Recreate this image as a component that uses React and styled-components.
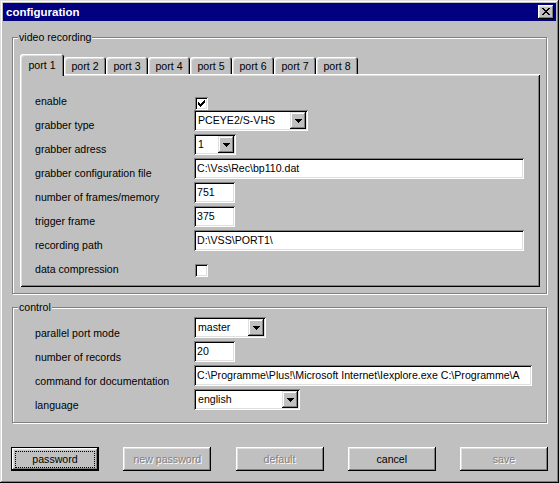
import React from "react";
import styled, { createGlobalStyle } from "styled-components";

const Global = createGlobalStyle`
  html, body { margin: 0; padding: 0; background: #c0c0c0; }
  * { box-sizing: border-box; }
`;

const FONT = `"Liberation Sans", Arial, sans-serif`;

const Window = styled.div`
  width: 559px;
  height: 483px;
  padding: 3px;
  background: #c0c0c0;
  font-family: ${FONT};
  font-size: 10.6px;
  color: #000;
  box-shadow: inset -1px -1px #000, inset 1px 1px #dfdfdf,
    inset -2px -2px #808080, inset 2px 2px #fff;
`;

const TitleBar = styled.div`
  height: 18px;
  background: #000080;
  display: flex;
  align-items: center;
  justify-content: space-between;
  padding: 0 2px 0 3px;
`;

const TitleText = styled.div`
  color: #fff;
  font-weight: bold;
  font-size: 11.5px;
  line-height: 14px;
`;

const CloseButton = styled.div`
  width: 16px;
  height: 14px;
  background: #c0c0c0;
  display: flex;
  align-items: center;
  justify-content: center;
  padding: 0 0 1px 0;
  box-shadow: inset -1px -1px #000, inset 1px 1px #fff,
    inset -2px -2px #808080, inset 2px 2px #dfdfdf;
`;

const Group = styled.div`
  position: relative;
  width: 535px;
  height: ${(p) => p.$h}px;
  margin: ${(p) => p.$mt}px 0 0 9px;
  padding: ${(p) => p.$pad};
  border: 1px solid #808080;
  box-shadow: inset 1px 1px #fff, 1px 1px #fff;
`;

const Legend = styled.div`
  position: absolute;
  left: 5px;
  top: -8px;
  line-height: 14px;
  padding: 0 1px;
  background: #c0c0c0;
`;

const TabStrip = styled.div`
  display: flex;
  align-items: flex-end;
  height: 20px;
`;

const Tab = styled.div`
  position: relative;
  z-index: ${(p) => (p.$active ? 2 : 0)};
  width: ${(p) => (p.$active ? 44 : 42)}px;
  height: ${(p) => (p.$active ? 22 : 17)}px;
  margin-bottom: ${(p) => (p.$active ? -2 : 0)}px;
  padding-top: ${(p) => (p.$active ? 5 : 3)}px;
  line-height: 13px;
  text-align: center;
  background: #c0c0c0;
  border-radius: 3px 3px 0 0;
  box-shadow: inset 1px 1px #fff, inset -1px 0 #000, inset -2px 0 #808080,
    inset 2px 2px #dfdfdf;
`;

const Panel = styled.div`
  width: 520px;
  height: 213px;
  padding: 12px 0 0 15px;
  box-shadow: inset 1px 1px #fff, inset -1px -1px #000,
    inset 2px 2px #dfdfdf, inset -2px -2px #808080;
`;

const Row = styled.div`
  display: flex;
  align-items: flex-start;
  height: 24px;
`;

const Label = styled.div`
  width: 159px;
  padding-top: ${(p) => p.$pt}px;
  line-height: 13px;
  white-space: nowrap;
`;

const sunken = `
  background: #fff;
  box-shadow: inset 1px 1px #808080, inset -1px -1px #fff,
    inset 2px 2px #000, inset -2px -2px #dfdfdf;
`;

const TextField = styled.div`
  ${sunken}
  width: ${(p) => p.$w}px;
  height: 21px;
  padding: 3px 3px 0 3px;
  line-height: 14px;
  white-space: nowrap;
  overflow: hidden;
`;

const Combo = styled.div`
  ${sunken}
  width: ${(p) => p.$w}px;
  height: 21px;
  padding: 2px;
  display: flex;
  align-items: stretch;
`;

const ComboText = styled.div`
  flex: 1;
  padding: 1px 0 0 2px;
  line-height: 14px;
  white-space: nowrap;
  overflow: hidden;
`;

const ComboButton = styled.div`
  width: 16px;
  height: 17px;
  background: #c0c0c0;
  display: flex;
  align-items: center;
  justify-content: center;
  box-shadow: inset -1px -1px #000, inset 1px 1px #dfdfdf,
    inset -2px -2px #808080, inset 2px 2px #fff;
`;

const CheckBox = styled.div`
  ${sunken}
  width: 13px;
  height: 13px;
  margin: ${(p) => p.$mt}px 0 0 1px;
  display: flex;
`;

const ButtonRow = styled.div`
  display: flex;
  justify-content: space-between;
  width: 537px;
  margin: 24px 0 0 8px;
`;

const Button = styled.div`
  width: 88px;
  height: 24px;
  display: flex;
  align-items: center;
  justify-content: center;
  background: #c0c0c0;
  line-height: 13px;
  color: ${(p) => (p.$disabled ? "#808080" : "#000")};
  text-shadow: ${(p) => (p.$disabled ? "1px 1px 0 #fff" : "none")};
  border: ${(p) => (p.$default ? "1px solid #000" : "none")};
  box-shadow: inset -1px -1px #000, inset 1px 1px #fff,
    inset -2px -2px #808080, inset 2px 2px #dfdfdf;
`;

const Focus = styled.div`
  width: 80px;
  height: 17px;
  border: 1px dotted #000;
  display: flex;
  align-items: center;
  justify-content: center;
`;

function Pixels({ rows, color = "#000" }) {
  const w = rows[0].length;
  const h = rows.length;
  const rects = [];
  rows.forEach((r, y) =>
    r.split("").forEach((c, x) => {
      if (c === "X") rects.push(<rect key={`${x}-${y}`} x={x} y={y} width="1" height="1" />);
    })
  );
  return (
    <svg width={w} height={h} viewBox={`0 0 ${w} ${h}`} shapeRendering="crispEdges" fill={color}>
      {rects}
    </svg>
  );
}

const CLOSE = [
  "XX....XX",
  ".XX..XX.",
  "..XXXX..",
  "...XX...",
  "..XXXX..",
  ".XX..XX.",
  "XX....XX",
];
const CHECK = [
  "......X",
  ".....XX",
  "X...XXX",
  "XX.XXX.",
  "XXXXX..",
  ".XXX...",
  "..X....",
];
const ARROW = ["XXXXXXX", ".XXXXX.", "..XXX..", "...X..."];

const CheckMarkWrap = styled.div`
  padding: 3px 0 0 3px;
  display: flex;
`;

function Check({ checked, mt }) {
  return (
    <CheckBox $mt={mt}>
      {checked && (
        <CheckMarkWrap>
          <Pixels rows={CHECK} />
        </CheckMarkWrap>
      )}
    </CheckBox>
  );
}

function Select({ w, value }) {
  return (
    <Combo $w={w}>
      <ComboText>{value}</ComboText>
      <ComboButton>
        <Pixels rows={ARROW} />
      </ComboButton>
    </Combo>
  );
}

const tabs = ["port 1", "port 2", "port 3", "port 4", "port 5", "port 6", "port 7", "port 8"];

export default function App() {
  return (
    <>
      <Global />
      <Window>
        <TitleBar>
          <TitleText>configuration</TitleText>
          <CloseButton>
            <Pixels rows={CLOSE} />
          </CloseButton>
        </TitleBar>

        <Group $h={257} $mt={16} $pad="16px 0 0 7px">
          <Legend>video recording</Legend>
          <TabStrip>
            {tabs.map((t, i) => (
              <Tab key={t} $active={i === 0}>
                {t}
              </Tab>
            ))}
          </TabStrip>
          <Panel>
            <Row>
              <Label $pt={9}>enable</Label>
              <Check checked mt={11} />
            </Row>
            <Row>
              <Label $pt={9}>grabber type</Label>
              <Select w={114} value="PCEYE2/S-VHS" />
            </Row>
            <Row>
              <Label $pt={9}>grabber adress</Label>
              <Select w={42} value="1" />
            </Row>
            <Row>
              <Label $pt={9}>grabber configuration file</Label>
              <TextField $w={330}>{"C:\\Vss\\Rec\\bp110.dat"}</TextField>
            </Row>
            <Row>
              <Label $pt={9}>number of frames/memory</Label>
              <TextField $w={41}>751</TextField>
            </Row>
            <Row>
              <Label $pt={9}>trigger frame</Label>
              <TextField $w={41}>375</TextField>
            </Row>
            <Row>
              <Label $pt={9}>recording path</Label>
              <TextField $w={330}>{"D:\\VSS\\PORT1\\"}</TextField>
            </Row>
            <Row>
              <Label $pt={9}>data compression</Label>
              <Check mt={10} />
            </Row>
          </Panel>
        </Group>

        <Group $h={116} $mt={13} $pad="9px 0 0 22px">
          <Legend>control</Legend>
          <Row>
            <Label $pt={10}>parallel port mode</Label>
            <Select w={72} value="master" />
          </Row>
          <Row>
            <Label $pt={10}>number of records</Label>
            <TextField $w={41}>20</TextField>
          </Row>
          <Row>
            <Label $pt={10}>command for documentation</Label>
            <TextField $w={338}>
              {"C:\\Programme\\Plus!\\Microsoft Internet\\Iexplore.exe C:\\Programme\\A"}
            </TextField>
          </Row>
          <Row>
            <Label $pt={10}>language</Label>
            <Select w={106} value="english" />
          </Row>
        </Group>

        <ButtonRow>
          <Button $default>
            <Focus>password</Focus>
          </Button>
          <Button $disabled>new password</Button>
          <Button $disabled>default</Button>
          <Button>cancel</Button>
          <Button $disabled>save</Button>
        </ButtonRow>
      </Window>
    </>
  );
}
